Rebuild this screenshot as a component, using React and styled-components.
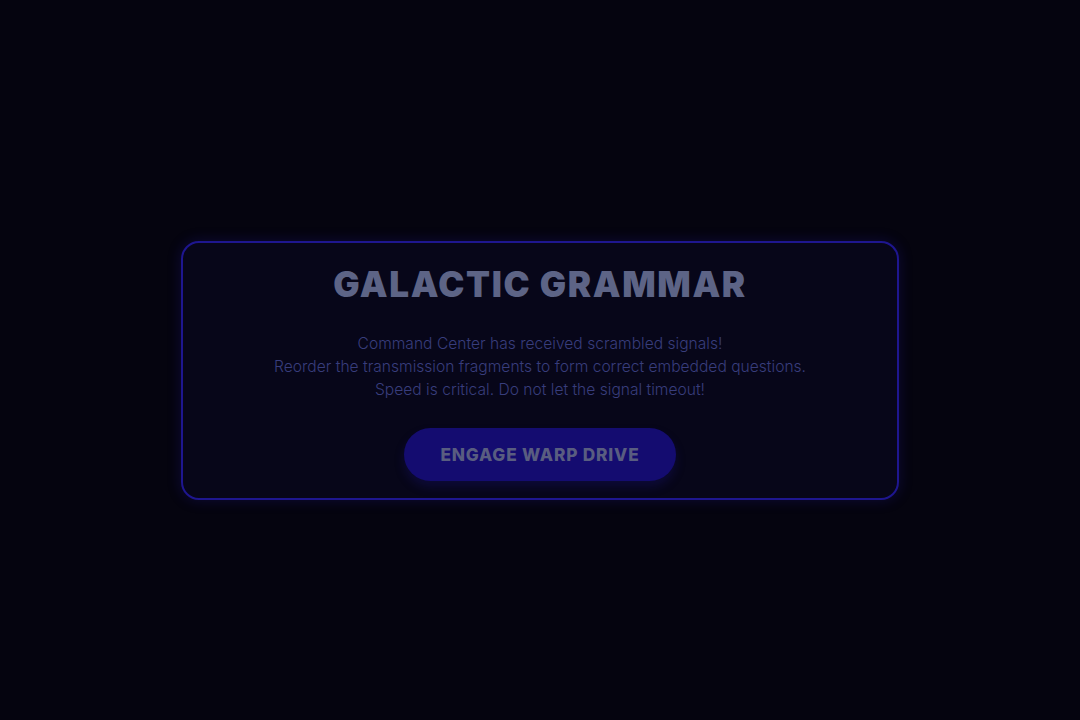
import React from "react";
import styled, { createGlobalStyle } from "styled-components";

const Global = createGlobalStyle`
  html, body { margin: 0; padding: 0; background: #05040f; }
  body { font-family: "Poppins", "Inter", "Noto Sans", sans-serif; }
`;

const Page = styled.div`
  width: 1080px;
  height: 720px;
  display: flex;
  align-items: center;
  justify-content: center;
  background: #05040f;
`;

const Card = styled.div`
  box-sizing: border-box;
  width: 718px;
  height: 259px;
  margin-top: 20px;
  border: 2px solid #1e168f;
  border-radius: 18px;
  background: #070619;
  box-shadow: 0 0 14px rgba(40, 30, 180, 0.25);
  display: flex;
  flex-direction: column;
  align-items: center;
  padding-top: 16px;
`;

const Title = styled.h1`
  margin: 0;
  font-family: "Inter", "Noto Sans", sans-serif;
  font-weight: 900;
  font-size: 35px;
  letter-spacing: 1.6px;
  line-height: 50px;
  color: #5d6486;
`;

const Text = styled.p`
  margin: 23px 0 0;
  font-family: "Inter", "Noto Sans", sans-serif;
  font-weight: 300;
  font-size: 15.6px;
  line-height: 23px;
  color: #383d7c;
  text-align: center;
`;

const Button = styled.button`
  margin-top: 27px;
  width: 272px;
  height: 53px;
  border: none;
  border-radius: 27px;
  background: #140c70;
  box-shadow: 0 6px 10px rgba(20, 15, 90, 0.45);
  font-family: "Inter", "Noto Sans", sans-serif;
  font-weight: 800;
  font-size: 17.3px;
  letter-spacing: 0.8px;
  color: #595d80;
  cursor: pointer;
`;

export default function App() {
  return (
    <>
      <Global />
      <Page>
        <Card>
          <Title>GALACTIC GRAMMAR</Title>
          <Text>
            Command Center has received scrambled signals!
            <br />
            Reorder the transmission fragments to form correct embedded questions.
            <br />
            Speed is critical. Do not let the signal timeout!
          </Text>
          <Button>ENGAGE WARP DRIVE</Button>
        </Card>
      </Page>
    </>
  );
}
